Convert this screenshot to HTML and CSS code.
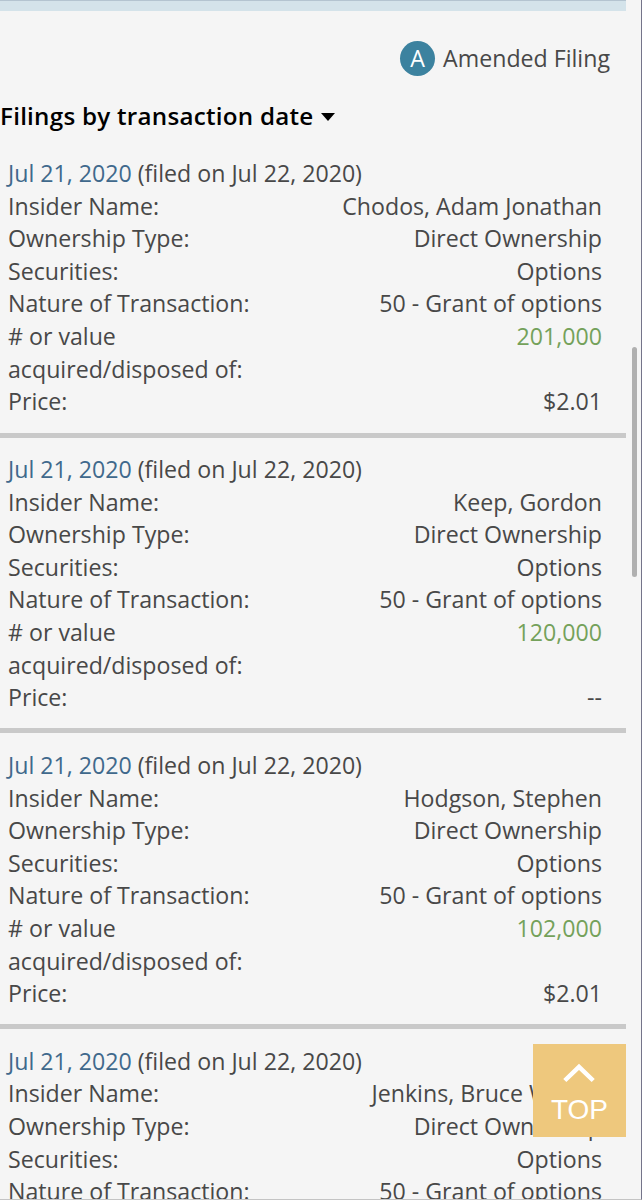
FILE: index.html
```html
<!DOCTYPE html>
<html lang="en">
<head>
    <meta charset="utf-8">
    <title>Insider Filings</title>
    <link rel="stylesheet" href="styles.css">
</head>

<body>
    <div class="page">
        <div class="banner"></div>
        <div class="legend">
            <span class="badge">A</span>
            <span>Amended Filing</span>
        </div>
        <h2 class="title">Filings by transaction date <span class="caret"></span></h2>

        <div class="filing">
            <div><a class="date">Jul 21, 2020</a> (filed on Jul 22, 2020)</div>
            <div class="row"><span>Insider Name:</span><span>Chodos, Adam Jonathan</span></div>
            <div class="row"><span>Ownership Type:</span><span>Direct Ownership</span></div>
            <div class="row"><span>Securities:</span><span>Options</span></div>
            <div class="row"><span>Nature of Transaction:</span><span>50 - Grant of options</span></div>
            <div class="row"><span># or value<br>acquired/disposed of:</span><span class="acquired">201,000</span></div>
            <div class="row"><span>Price:</span><span>$2.01</span></div>
        </div>

        <div class="filing">
            <div><a class="date">Jul 21, 2020</a> (filed on Jul 22, 2020)</div>
            <div class="row"><span>Insider Name:</span><span>Keep, Gordon</span></div>
            <div class="row"><span>Ownership Type:</span><span>Direct Ownership</span></div>
            <div class="row"><span>Securities:</span><span>Options</span></div>
            <div class="row"><span>Nature of Transaction:</span><span>50 - Grant of options</span></div>
            <div class="row"><span># or value<br>acquired/disposed of:</span><span class="acquired">120,000</span></div>
            <div class="row"><span>Price:</span><span>--</span></div>
        </div>

        <div class="filing">
            <div><a class="date">Jul 21, 2020</a> (filed on Jul 22, 2020)</div>
            <div class="row"><span>Insider Name:</span><span>Hodgson, Stephen</span></div>
            <div class="row"><span>Ownership Type:</span><span>Direct Ownership</span></div>
            <div class="row"><span>Securities:</span><span>Options</span></div>
            <div class="row"><span>Nature of Transaction:</span><span>50 - Grant of options</span></div>
            <div class="row"><span># or value<br>acquired/disposed of:</span><span class="acquired">102,000</span></div>
            <div class="row"><span>Price:</span><span>$2.01</span></div>
        </div>

        <div class="filing">
            <div><a class="date">Jul 21, 2020</a> (filed on Jul 22, 2020)</div>
            <div class="row"><span>Insider Name:</span><span>Jenkins, Bruce Wayne</span></div>
            <div class="row"><span>Ownership Type:</span><span>Direct Ownership</span></div>
            <div class="row"><span>Securities:</span><span>Options</span></div>
            <div class="row"><span>Nature of Transaction:</span><span>50 - Grant of options</span></div>
        </div>
    </div>

    <div class="scroll-thumb"></div>
    <a class="to-top">
        <svg width="34" height="20" viewBox="0 0 34 20">
            <path d="M1.8 17.5 L16 3.8 L30.2 17.5" fill="none" stroke="#fff" stroke-width="4.5"/>
        </svg>
        <span>TOP</span>
    </a>
</body>
</html>
```
FILE: styles.css
```css
body {
    margin: 0;
    height: 1200px;
    box-sizing: border-box;
    overflow: hidden;
    position: relative;
    background: #f5f5f5;
    border-right: 1px solid #74748a;
    border-bottom: 1px solid #c4c4c4;
    font-family: "Open Sans", sans-serif;
    font-size: 23.17px;
    line-height: 32.6px;
    color: #484848;
}

.page {
    width: 626px;
}

.banner {
    height: 11px;
    box-sizing: border-box;
    background: #d4e3ea;
    border-top: 1px solid #b4c4d0;
}

.legend {
    display: flex;
    justify-content: flex-end;
    align-items: center;
    gap: 8px;
    padding: 30px 16px 0 0;
}

.badge {
    width: 35px;
    height: 35px;
    border-radius: 50%;
    background: #3c829f;
    color: #fff;
    text-align: center;
    line-height: 35px;
}

.title {
    margin: 24.4px 0 8.6px;
    font-size: 24.2px;
    letter-spacing: 0.25px;
    font-weight: 600;
    color: #000;
}

.caret {
    display: inline-block;
    margin-left: 1px;
    border: 7px solid transparent;
    border-top: 8px solid #000;
    border-bottom: 0;
    vertical-align: 4px;
}

.filing {
    padding: 15.5px 24px 14.7px 8px;
    border-bottom: 5px solid #c9c9c9;
}

.row {
    display: flex;
    justify-content: space-between;
}

.date {
    color: #40698c;
}

.acquired {
    color: #74a15a;
}

/* overlays */
.scroll-thumb {
    position: absolute;
    top: 347px;
    right: 4px;
    width: 5px;
    height: 230px;
    border-radius: 3px;
    background: #b0b0b0;
}

.to-top {
    position: absolute;
    top: 1044px;
    left: 533px;
    width: 93px;
    height: 93px;
    box-sizing: border-box;
    padding-top: 19px;
    display: flex;
    flex-direction: column;
    align-items: center;
    background: #eec87d;
    color: #fff;
    font-family: "Liberation Sans", Arial, sans-serif;
    font-size: 28px;
    line-height: 53px;
}
```
